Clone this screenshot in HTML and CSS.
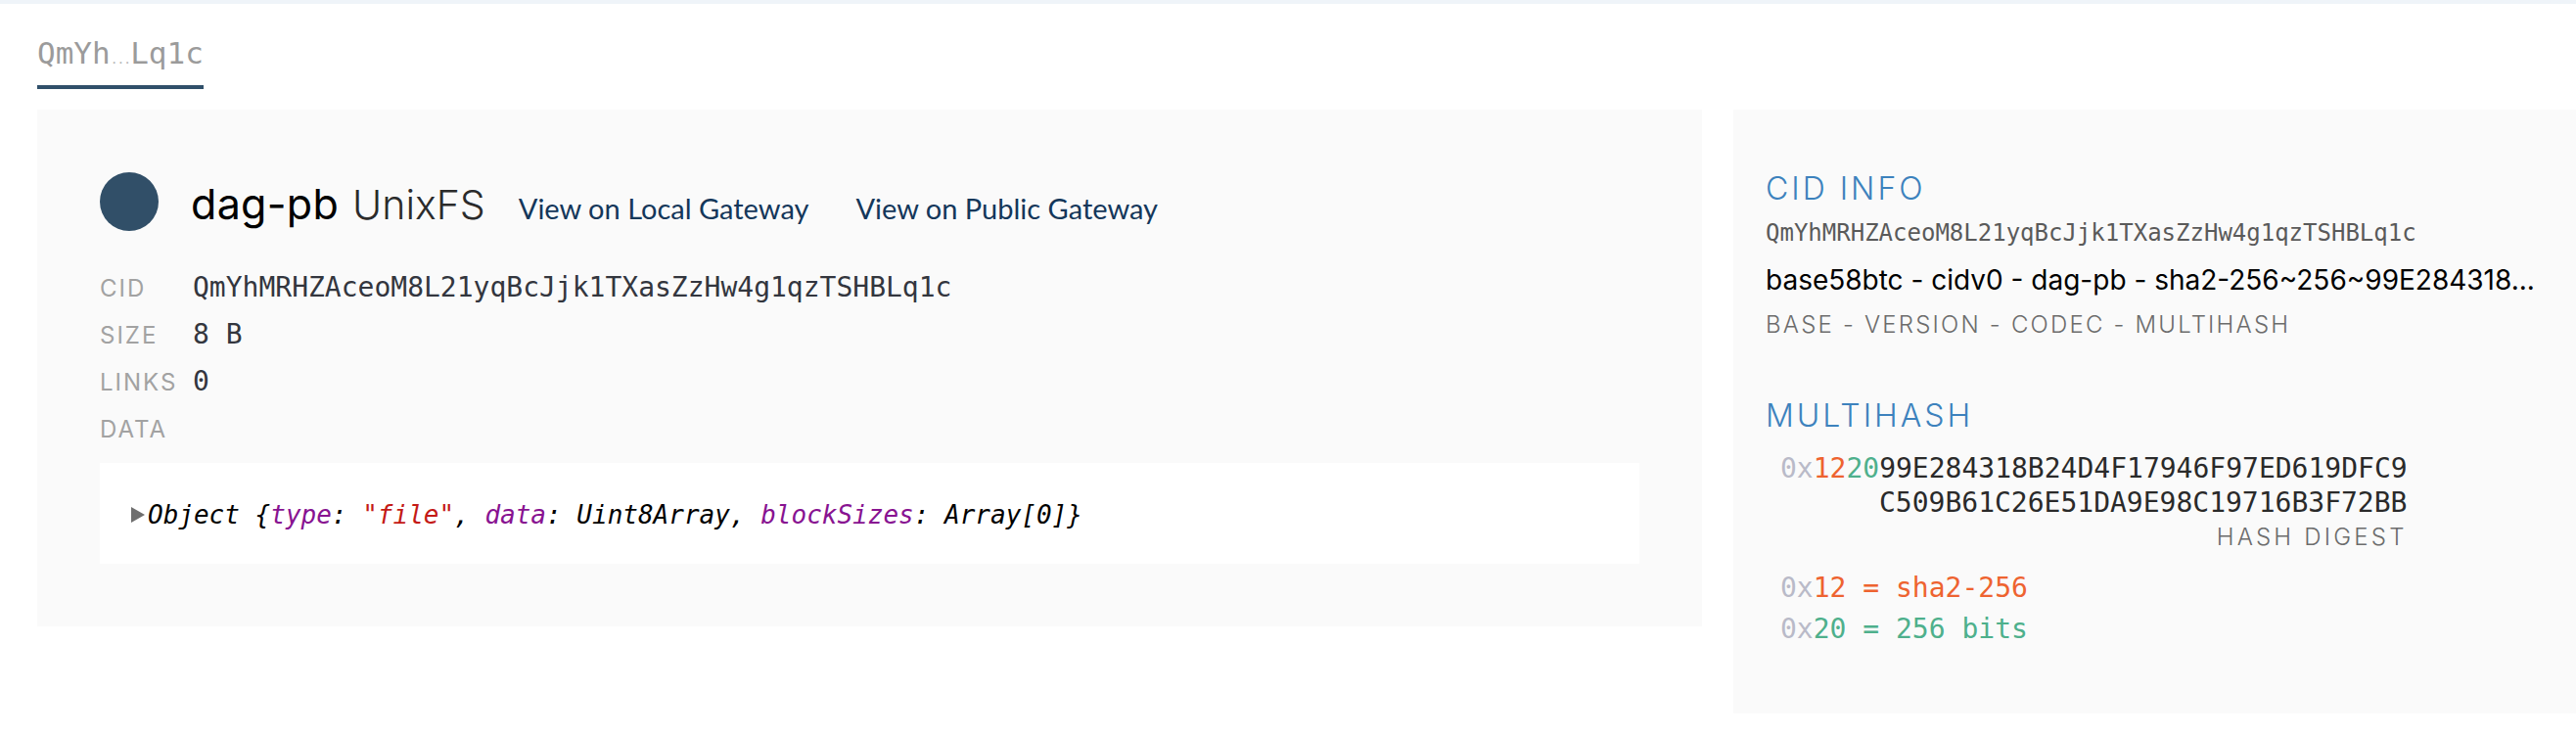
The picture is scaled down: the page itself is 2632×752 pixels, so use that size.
FILE: index.html
```html
<!DOCTYPE html>
<html lang="en">
<head>
<meta charset="utf-8">
<title>QmYhMRHZAceoM8L21yqBcJjk1TXasZzHw4g1qzTSHBLq1c</title>
<link rel="stylesheet" href="styles.css">
</head>
<body>
<div class="topband"></div>
<div class="page">
  <div class="crumbs">
    <span class="tab">QmYh<span class="dots">...</span>Lq1c</span>
  </div>
  <div class="columns">
    <section class="node">
      <div class="node-head">
        <span class="dot"></span>
        <div class="titles">
          <span class="codec">dag-pb</span>
          <span class="format">UnixFS</span>
          <a class="gw" href="#">View on Local Gateway</a>
          <a class="gw" href="#">View on Public Gateway</a>
        </div>
      </div>
      <div class="props">
        <div class="label">CID</div><div class="value">QmYhMRHZAceoM8L21yqBcJjk1TXasZzHw4g1qzTSHBLq1c</div>
        <div class="label">SIZE</div><div class="value">8 B</div>
        <div class="label">LINKS</div><div class="value">0</div>
        <div class="label">DATA</div><div class="value"></div>
      </div>
      <div class="data">
        <span class="arrow"></span><span class="obj">Object {<span class="key">type</span>: <span class="str">"file"</span>, <span class="key">data</span>: Uint8Array, <span class="key">blockSizes</span>: Array[0]}</span>
      </div>
    </section>
    <aside class="info">
      <h2 class="heading">CID INFO</h2>
      <div class="cid">QmYhMRHZAceoM8L21yqBcJjk1TXasZzHw4g1qzTSHBLq1c</div>
      <div class="human">base58btc - cidv0 - dag-pb - sha2-256~256~99E284318...</div>
      <div class="caption">BASE - VERSION - CODEC - MULTIHASH</div>
      <h2 class="heading mh">MULTIHASH</h2>
      <div class="hash">
        <div class="hline"><span class="ox">0x</span><span class="fn">12</span><span class="len">20</span>99E284318B24D4F17946F97ED619DFC9</div>
        <div class="hline indent">C509B61C26E51DA9E98C19716B3F72BB</div>
        <div class="caption right">HASH DIGEST</div>
      </div>
      <div class="legend">
        <div class="lline"><span class="ox">0x</span><span class="fn">12 = sha2-256</span></div>
        <div class="lline"><span class="ox">0x</span><span class="len">20 = 256 bits</span></div>
      </div>
    </aside>
  </div>
</div>
</body>
</html>
```
FILE: styles.css
```css
html, body {
  margin: 0;
  padding: 0;
  background: #ffffff;
}
body {
  font-family: "Inter", "Liberation Sans", sans-serif;
  color: #000;
}
.topband {
  height: 4px;
  background: #eff4f9;
}
.page {
  padding-left: 38px;
}
.crumbs {
  padding-top: 32px;
  height: 48px;
  margin-bottom: 28px;
}
.tab {
  display: inline-block;
  font-family: "DejaVu Sans Mono", monospace;
  font-size: 31px;
  line-height: 36px;
  color: #9b9b9b;
  padding-bottom: 8px;
  border-bottom: 4px solid #30506a;
}
.dots {
  font-size: 13px;
  letter-spacing: -1px;
  color: #b8b8b8;
}
.columns {
  display: grid;
  grid-template-columns: 1fr 861px;
  column-gap: 32px;
  align-items: start;
}
.node {
  background: #fafafa;
  padding: 64px;
}
.node-head {
  display: flex;
  align-items: center;
  height: 60px;
}
.dot {
  width: 60px;
  height: 60px;
  border-radius: 50%;
  background: #314f68;
  margin-right: 33px;
  flex: none;
}
.titles {
  display: flex;
  align-items: baseline;
  margin-top: 4px;
}
.codec {
  font-size: 43px;
  color: #000;
  font-weight: 400;
  letter-spacing: 0.3px;
  margin-right: 14px;
}
.format {
  font-size: 41px;
  color: #2b2b2b;
  font-weight: 300;
  margin-right: 34px;
}
.gw {
  font-family: "Lato", "Liberation Sans", sans-serif;
  font-size: 29px;
  color: #14375a;
  text-decoration: none;
  margin-right: 48px;
}
.props {
  margin-top: 34px;
  display: grid;
  grid-template-columns: 95px 1fr;
  grid-auto-rows: 48px;
  align-items: baseline;
}
.label {
  font-size: 24px;
  line-height: 50px;
  letter-spacing: 2px;
  color: #a2a2a2;
}
.value {
  font-family: "DejaVu Sans Mono", monospace;
  font-size: 28px;
  line-height: 48px;
  color: #33363e;
}
.data {
  margin-top: 11px;
  background: #ffffff;
  height: 103px;
  padding-left: 32px;
  display: flex;
  align-items: center;
  padding-top: 2px;
  box-sizing: border-box;
}
.arrow {
  width: 0;
  height: 0;
  border-left: 14px solid #6e6e6e;
  border-top: 8px solid transparent;
  border-bottom: 8px solid transparent;
  margin-right: 3px;
}
.obj {
  font-family: "DejaVu Sans Mono", monospace;
  font-style: italic;
  font-size: 26px;
  color: #000;
}
.key {
  color: #881391;
}
.str {
  color: #c41a16;
}
.info {
  background: #fafafa;
  padding: 61px 0 65px 33px;
  min-width: 0;
}
.heading {
  margin: 0;
  font-size: 32px;
  line-height: 40px;
  font-weight: 300;
  letter-spacing: 3px;
  color: #3d82bd;
}
.heading.mh {
  margin-top: 57px;
}
.cid {
  margin-top: 9px;
  font-family: "DejaVu Sans Mono", monospace;
  font-size: 24px;
  line-height: 32px;
  color: #5a5a5a;
}
.human {
  margin-top: 12px;
  font-size: 28px;
  line-height: 40px;
  color: #000;
  white-space: nowrap;
}
.caption {
  margin-top: 10px;
  font-size: 24px;
  line-height: 32px;
  font-weight: 300;
  letter-spacing: 2.2px;
  color: #6c6c6c;
}
.hash {
  display: inline-block;
  margin-top: 16px;
  margin-left: 15px;
}
.hline {
  font-family: "DejaVu Sans Mono", monospace;
  font-size: 28px;
  line-height: 35px;
  color: #2a2a2a;
  white-space: nowrap;
}
.indent {
  padding-left: 101px;
}
.caption.right {
  margin-top: 2px;
  text-align: right;
  letter-spacing: 3.2px;
}
.ox {
  color: #b9bac8;
}
.fn {
  color: #ee6330;
}
.len {
  color: #4eb08c;
}
.legend {
  margin-top: 15px;
  margin-left: 15px;
}
.lline {
  font-family: "DejaVu Sans Mono", monospace;
  font-size: 28px;
  line-height: 42px;
  white-space: pre;
}
```
